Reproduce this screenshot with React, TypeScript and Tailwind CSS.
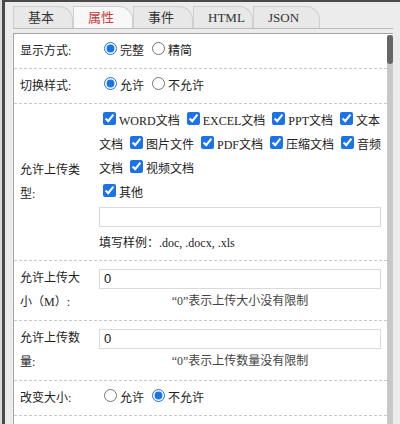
import React from "react";

const serif = "font-['Liberation_Serif','Noto_Sans_CJK_SC',serif]";

function Sep() {
  return <div className="h-px w-full bg-[repeating-linear-gradient(90deg,#c8c8c8_0_3px,transparent_3px_5px)]" />;
}

function Row({ label, children, pb = "pb-[5px]" }: { label: string; children: React.ReactNode; pb?: string }) {
  return (
    <>
      <div className={`flex items-center pt-[5px] ${pb}`}>
        <div className="w-[85px] shrink-0 pl-[6px] pr-[13px] leading-[24px] text-[12px] text-[#222]">{label}</div>
        <div className="flex-1 pr-[6px] leading-[24px] text-[12px] text-[#222]">{children}</div>
      </div>
      <Sep />
    </>
  );
}

function Radio({ checked, name, label }: { checked?: boolean; name: string; label: string }) {
  return (
    <label>
      <input
        type="radio"
        name={name}
        defaultChecked={checked}
        className="ml-[5px] mr-[3px] mt-[3px] align-baseline accent-[#1a73e8] w-[13px] h-[13px]"
      />
      {label}
    </label>
  );
}

function Check({ label }: { label: string }) {
  return (
    <label>
      <input
        type="checkbox"
        defaultChecked
        className="ml-[4px] mr-[3px] my-[3px] align-baseline accent-[#1a73e8] w-[13px] h-[13px]"
      />
      {label}
    </label>
  );
}

const tabs = [
  { t: "基本", w: "w-[60px]" },
  { t: "属性", w: "w-[60px]", active: true },
  { t: "事件", w: "w-[60px]" },
  { t: "HTML", w: "w-[60px]" },
  { t: "JSON", w: "w-[67px]" },
];

const types = ["WORD文档", "EXCEL文档", "PPT文档", "文本文档", "图片文件", "PDF文档", "压缩文档", "音频文档", "视频文档"];

export default function App() {
  return (
    <div className={`w-[400px] h-[424px] overflow-hidden bg-[#dcdcdc] pl-[2px] ${serif}`}>
      <div className="h-full flex flex-col border-l-[3px] border-t-[2px] border-[#4a4a4a] bg-[#ececec] pl-[8px] pr-[7px] pt-[4px]">
        <div className="flex items-end border-b border-[#bdbdbd]">
          {tabs.map((tab) => (
            <div
              key={tab.t}
              className={`${tab.w} h-[22px] shrink-0 pl-[14px] leading-[22px] text-[13px] border-t border-l border-r border-[#cfcfcf] rounded-tr-[14px] ${
                tab.active ? "bg-[#f8f8f8] text-[#c9403f]" : "bg-[#e8e8e8] text-[#333]"
              }`}
            >
              {tab.t}
            </div>
          ))}
        </div>
        <div className="mt-[4px] flex-1 flex border-t border-l border-[#a3a3a3] bg-white">
          <div className="flex-1 flex flex-col">
            <Row label="显示方式:">
              <Radio name="a" checked label="完整" /> <Radio name="a" label="精简" />
            </Row>
            <Row label="切换样式:">
              <Radio name="b" checked label="允许" /> <Radio name="b" label="不允许" />
            </Row>
            <Row label="允许上传类型:">
              <div className="-mr-[3px]">
                {types.map((t) => (
                  <React.Fragment key={t}>
                    <Check label={t} />{" "}
                  </React.Fragment>
                ))}
                <br />
                <Check label="其他" />
              </div>
              <input
                readOnly
                className="mt-[2px] block w-full h-[20px] border border-[#dadada] px-[4px] font-['Liberation_Sans',sans-serif] text-[13px]"
                defaultValue=""
              />
              <div className="mt-[4px]">填写样例：.doc, .docx, .xls</div>
            </Row>
            <Row label="允许上传大小（M）:" pb="pb-[6px]">
              <input
                readOnly
                defaultValue="0"
                className="mt-[2px] block w-full h-[20px] border border-[#dadada] px-[4px] font-['Liberation_Sans',sans-serif] text-[13px] text-[#111]"
              />
              <div className="text-center text-[#444]">“0”表示上传大小没有限制</div>
            </Row>
            <Row label="允许上传数量:" pb="pb-[6px]">
              <input
                readOnly
                defaultValue="0"
                className="mt-[2px] block w-full h-[20px] border border-[#dadada] px-[4px] font-['Liberation_Sans',sans-serif] text-[13px] text-[#111]"
              />
              <div className="text-center text-[#444]">“0”表示上传数量没有限制</div>
            </Row>
            <Row label="改变大小:">
              <Radio name="c" label="允许" /> <Radio name="c" checked label="不允许" />
            </Row>
            <div className="h-[40px]" />
          </div>
          <div className="w-[6px] shrink-0 flex flex-col bg-[#c8c8c8]">
            <div className="h-px bg-white" />
            <div className="h-[29px] bg-[#666] rounded-[3px]" />
          </div>
        </div>
      </div>
    </div>
  );
}
